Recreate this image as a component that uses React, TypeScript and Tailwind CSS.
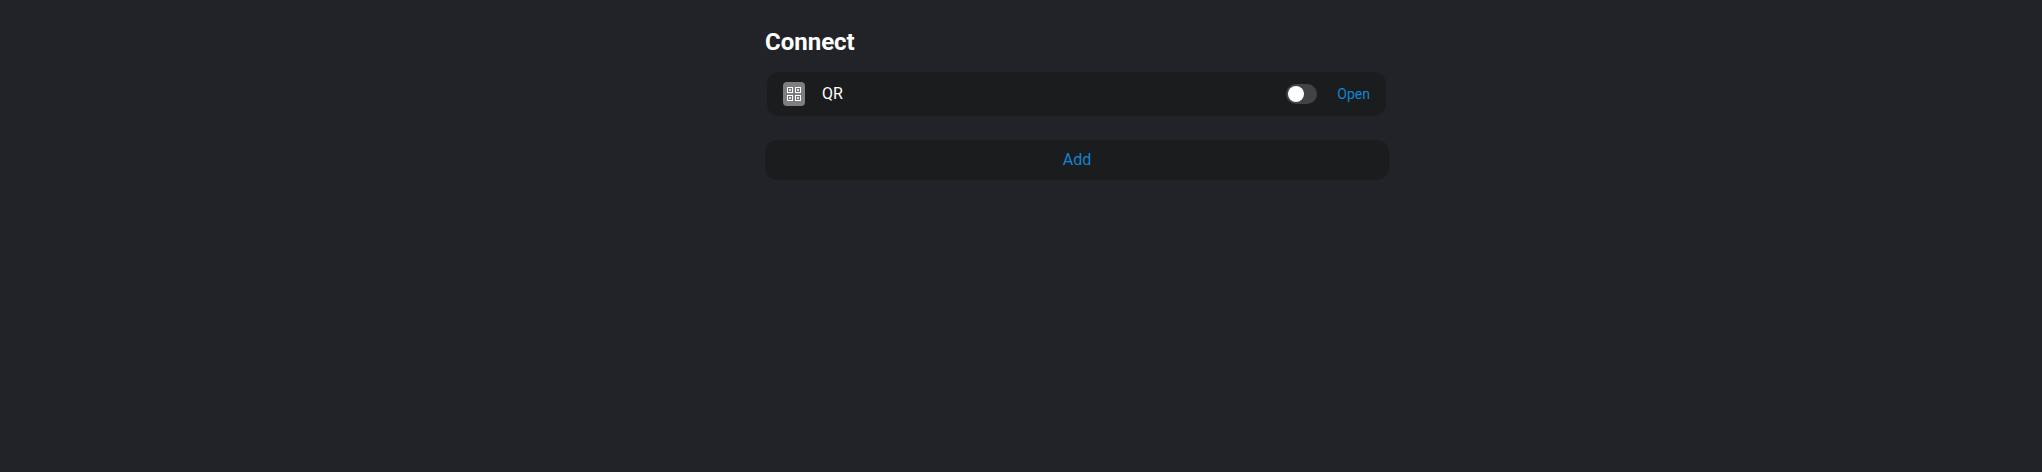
import { useState } from "react";

function QrIcon() {
  return (
    <span className="flex h-6 w-[22px] items-center justify-center rounded bg-[#7e7d82]">
      <svg width="14" height="14" viewBox="0 0 14 14" fill="none" aria-hidden="true">
        <path d="M6 8l2-2" stroke="#68676b" strokeWidth="1" />
        <g fill="#727176" stroke="#ffffff" strokeWidth="1">
          <rect x="0.5" y="0.5" width="5" height="5" />
          <rect x="8.5" y="0.5" width="5" height="5" />
          <rect x="0.5" y="8.5" width="5" height="5" />
          <rect x="8.5" y="8.5" width="5" height="5" />
        </g>
        <g fill="#e4e4e6">
          <rect x="2" y="2" width="2" height="2" />
          <rect x="10" y="2" width="2" height="2" />
          <rect x="2" y="10" width="2" height="2" />
          <rect x="10" y="10" width="2" height="2" />
        </g>
      </svg>
    </span>
  );
}

function ConnectionRow({ name }: { name: string }) {
  const [enabled, setEnabled] = useState(false);
  return (
    <li className="ml-0.5 mr-[3px] flex h-11 items-center rounded-xl bg-[#1b1c1e] px-4">
      <QrIcon />
      <span className="ml-[17px] flex-1 text-base text-white">{name}</span>
      <input
        type="checkbox"
        role="switch"
        aria-label={name}
        checked={enabled}
        onChange={(e) => setEnabled(e.target.checked)}
        className="flex h-5 w-[31px] cursor-pointer appearance-none items-center rounded-full bg-[#424345] px-0.5 before:size-4 before:rounded-full before:bg-white before:content-[''] checked:justify-end checked:bg-[#1484d4]"
      />
      <button type="button" className="ml-5 cursor-pointer text-sm text-[#1484d4]">
        Open
      </button>
    </li>
  );
}

export default function App() {
  return (
    <main className="min-h-screen bg-[#222328] pl-28 font-['Roboto',sans-serif]">
      <section className="mx-auto w-full max-w-[624px] pt-[26px]">
        <h1 className="text-2xl font-bold text-white">Connect</h1>
        <ul className="mt-3.5">
          <ConnectionRow name="QR" />
        </ul>
        <button
          type="button"
          className="mt-6 h-10 w-full cursor-pointer rounded-xl bg-[#1b1c1e] text-base text-[#1484d4]"
        >
          Add
        </button>
      </section>
    </main>
  );
}
